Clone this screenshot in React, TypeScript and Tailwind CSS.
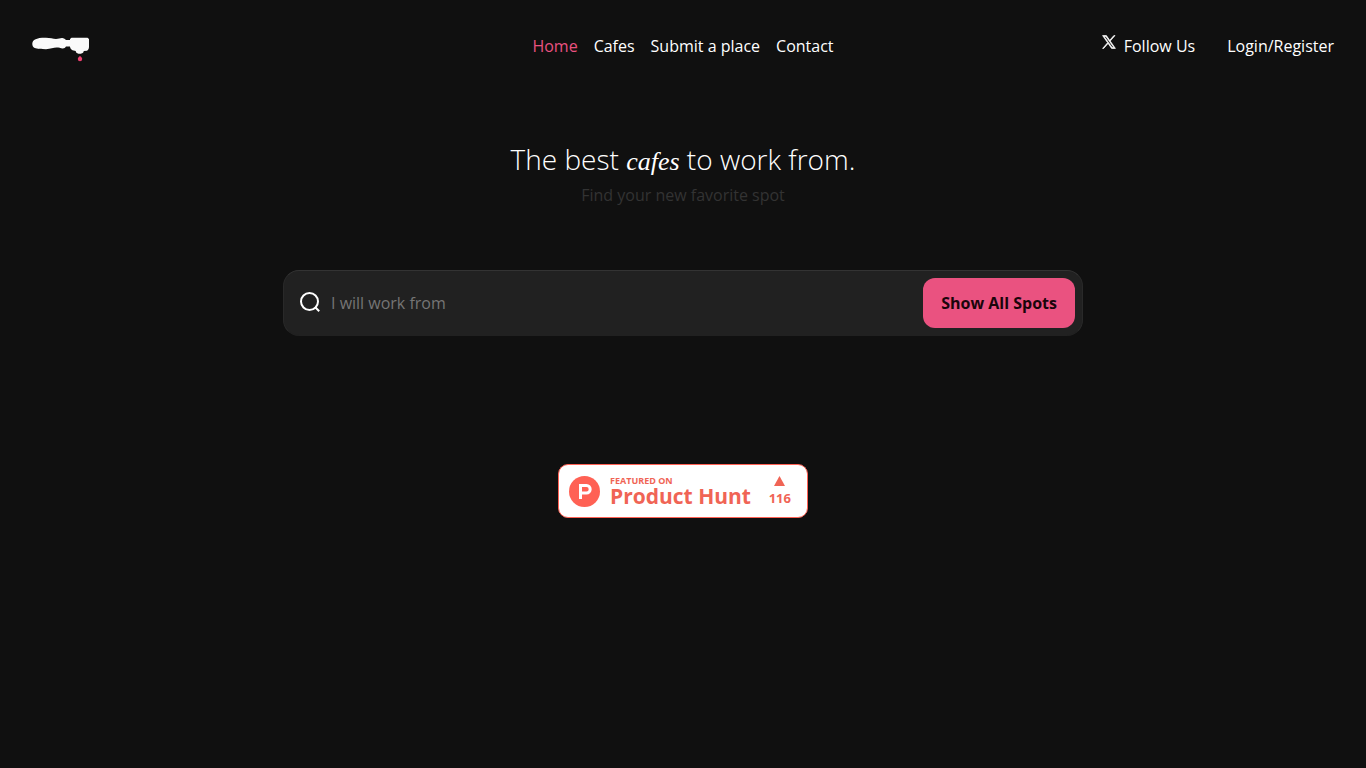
import { useState } from 'react';

const navLinks = [
    { label: 'Home', href: '#home' },
    { label: 'Cafes', href: '#cafes' },
    { label: 'Submit a place', href: '#submit' },
    { label: 'Contact', href: '#contact' },
];

function Logo() {
    return (
        <svg width="58" height="26" viewBox="0 0 58 26" aria-hidden="true">
            <path
                fill="#fafafa"
                d="M3 3.500C6 2 10 1.700 14 1.800c4 0 7 1.200 10 1.200s4.500-1.200 7-.8c1.500.2 2.300 1 3 1.800h4V3l1.500-1.200h16L57 3v7.500c0 2-.5 3.500-2 4.300l-3.200.2c-.2 1.300-.8 2-1.800 2.300-1.200.7-3.500.7-4.600 0-1-.4-1.500-1-1.700-2.300l-3.200-.8c-1.500-.7-2.300-1.900-2.500-3.700h-4c-.7 1.200-1.800 2-3.500 1.900-2-.1-3.500-.8-6-.8-3 0-6 1.600-10.500 1.600S5 12.800 2.700 12C.9 11.200.3 9.500.3 7.700S1.300 4.300 3 3.500z"
            />
            <path fill="#ef3f70" d="M48 20c1.400.9 2.200 1.900 2.200 3a2.200 2.200 0 0 1-4.400 0c0-1.100.8-2.100 2.200-3z" />
        </svg>
    );
}

function XIcon() {
    return (
        <svg width="14" height="16" viewBox="0 0 24 24" fill="currentColor" stroke="currentColor" strokeWidth="1.200" aria-hidden="true">
            <path d="M14.095 10.317 22.286 1h-1.940L13.230 9.088 7.551 1H1l8.590 12.231L1 23h1.940l7.511-8.543L16.450 23H23zM11.436 13.340l-.870-1.218L3.640 2.430h2.982l5.589 7.821.867 1.219 7.265 10.166h-2.982z" />
        </svg>
    );
}

function SearchIcon() {
    return (
        <svg width="24" height="24" viewBox="0 0 24 24" fill="none" stroke="currentColor" strokeWidth="2" aria-hidden="true">
            <circle cx="10.500" cy="10.500" r="8.500" />
            <path d="m16 16 4.200 4.200" />
        </svg>
    );
}

function Header() {
    return (
        <header className="grid grid-cols-[1fr_auto_1fr] items-start px-8 py-[34px] text-white">
            <a href="#home" aria-label="Homepage" className="mt-0.5 justify-self-start">
                <Logo />
            </a>
            <nav className="flex gap-4">
                {navLinks.map((link, index) => (
                    <a key={link.label} href={link.href} className={index === 0 ? 'text-[#ea5280]' : ''}>
                        {link.label}
                    </a>
                ))}
            </nav>
            <div className="flex gap-8 justify-self-end">
                <a href="#follow" className="flex gap-2">
                    <XIcon />
                    Follow Us
                </a>
                <a href="#login">Login/Register</a>
            </div>
        </header>
    );
}

function SearchForm() {
    const [query, setQuery] = useState('');

    return (
        <form
            onSubmit={(e) => e.preventDefault()}
            className="mt-[63px] flex w-full max-w-[800px] items-center rounded-2xl border border-t-[#333333] border-x-[#292929] border-b-[#212121] bg-[#212121] py-[7px] pr-[7px] pl-[15px]"
        >
            <label htmlFor="search" aria-label="Search cafes" className="text-white">
                <SearchIcon />
            </label>
            <input
                id="search"
                type="text"
                value={query}
                onChange={(e) => setQuery(e.target.value)}
                placeholder="I will work from"
                className="ml-2 min-w-0 flex-1 bg-transparent text-white outline-none placeholder:text-[#757575]"
            />
            <button type="submit" className="h-[50px] rounded-xl bg-[#ea5280] px-[18px] font-bold text-[#1a050b]">
                Show All Spots
            </button>
        </form>
    );
}

function ProductHuntBadge() {
    return (
        <a
            href="#product-hunt"
            className="mt-32 flex h-[54px] w-[250px] items-center rounded-[10px] border border-[#ff6154] bg-white pr-4 pl-[10px] font-bold text-[#f06455]"
        >
            <svg width="31" height="31" viewBox="0 0 31 31" aria-hidden="true">
                <circle cx="15.500" cy="15.500" r="15.500" fill="#ff6154" />
                <path
                    fill="#fff"
                    fillRule="evenodd"
                    d="M10 8h7.500a5.200 5.200 0 0 1 0 10.400H13V23h-3zm3 3v4.400h4.500a2.200 2.200 0 0 0 0-4.400z"
                />
            </svg>
            <div className="ml-[10px] flex-1">
                <div className="text-[9px] leading-[10px]">FEATURED ON</div>
                <div className="text-[21px] leading-[21px] whitespace-nowrap">Product Hunt</div>
            </div>
            <div className="flex flex-col items-center gap-1">
                <svg width="11" height="10" viewBox="0 0 11 10" fill="currentColor" aria-hidden="true">
                    <path d="M5.500 0 11 10H0z" />
                </svg>
                <span className="text-[13px] leading-4">116</span>
            </div>
        </a>
    );
}

export default function App() {
    return (
        <div className="min-h-screen bg-[#101010] font-['Open_Sans',sans-serif] text-base">
            <Header />
            <main className="flex flex-col items-center px-8 pt-[45px]">
                <h1 className="text-center text-[28px] leading-9 font-light text-white">
                    The best <em className="font-['Liberation_Serif',serif] text-[26px] font-medium">cafes</em> to work from.
                </h1>
                <p className="mt-[3px] text-[#333333]">Find your new favorite spot</p>
                <SearchForm />
                <ProductHuntBadge />
            </main>
        </div>
    );
}
